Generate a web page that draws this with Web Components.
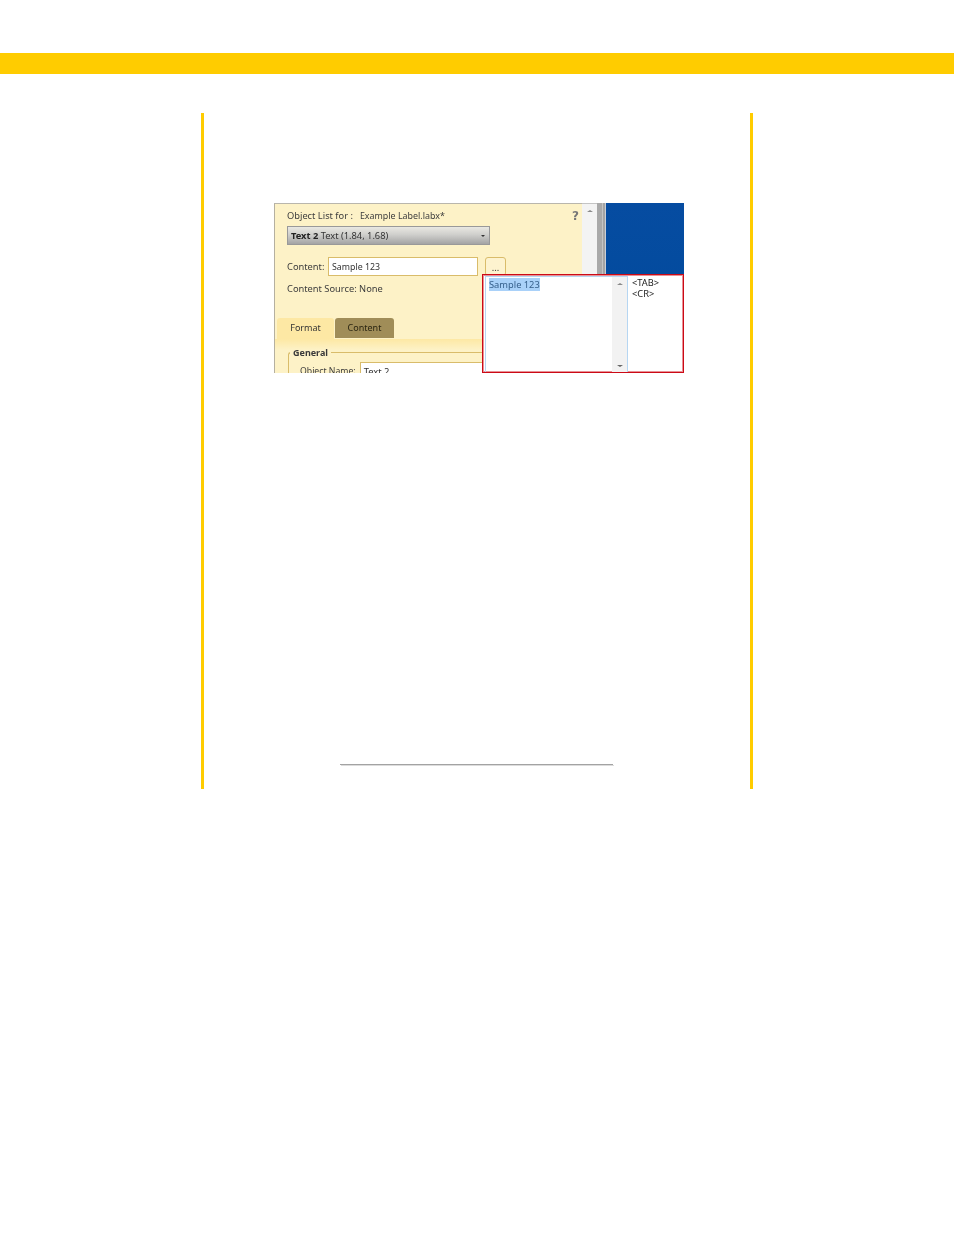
<!DOCTYPE html>
<html>
<head>
<meta charset="utf-8">
<title>Content</title>
<style>
html,body{margin:0;padding:0;background:#fff;}
</style>
</head>
<body>
<page-band></page-band>
<page-column>
  <label-shot></label-shot>
</page-column>

<script>
// yellow strip across the top of the page
class PageBand extends HTMLElement {
    constructor(){
        super();
        this.attachShadow({mode:'open'}).innerHTML = `
<style>
:host{display:block;height:21px;margin-top:53px;background:#ffcc00;}
</style>`;
    }
}

// text column with the two yellow side rules, and the footnote rule at its foot
class PageColumn extends HTMLElement {
    constructor(){
        super();
        this.attachShadow({mode:'open'}).innerHTML = `
<style>
:host{display:block;box-sizing:border-box;width:552px;height:676px;margin:39px 0 0 201px;
  border-left:3px solid #ffcc00;border-right:3px solid #ffcc00;padding:90px 0 0 70px;}
.rule{width:273px;height:1px;margin:391px 0 0 66px;background:#a3a3a3;box-shadow:1px 1px 0 #dcdcdc;}
</style>
<slot></slot>
<div class="rule"></div>`;
    }
}

class WinTab extends HTMLElement {
    constructor(){
        super();
        this.attachShadow({mode:'open'}).innerHTML = `
<style>
:host{display:block;box-sizing:border-box;height:21px;padding-top:3px;text-align:center;border-radius:3px 3px 0 0;
  font-size:9px;line-height:14px;color:#333;background:#fde8a4;}
:host([dark]){height:20px;background:#a08d58;color:#2b2612;}
</style>
<slot></slot>`;
    }
}

// the application's yellow side panel, cut off at the bottom by the screenshot
class ObjectPanel extends HTMLElement {
    constructor(){
        super();
        this.attachShadow({mode:'open'}).innerHTML = `
<style>
:host{display:block;box-sizing:border-box;width:308px;height:170px;overflow:hidden;
  border-left:1px solid #b5b0a0;border-top:1px solid #b9b6ac;background:#fdf2c7;color:#3c3c3c;font-size:9.3px;line-height:14px;}
.head{padding:5px 0 0 12px;}
.top{display:flex;padding-right:3px;}
.top b{margin-left:auto;font:bold 12px/14px "DejaVu Sans",sans-serif;color:#777;}
.top span+span{margin-left:7px;font-size:8.9px;}
.combo{box-sizing:border-box;display:flex;align-items:center;justify-content:space-between;width:203px;height:19px;margin-top:3px;padding:0 4px 0 3px;
  border:1px solid #999;background:linear-gradient(#e9e8e2,#cfcfcc 45%,#a4a4a4);color:#333;}
.combo b{color:#222;}
.combo i{width:0;height:0;border:2px solid transparent;border-top:2px solid #333;border-bottom:0;}
.row{display:flex;align-items:center;gap:4px;margin-top:12px;height:19px;}
.row>span:first-child{width:37px;}
.field{box-sizing:border-box;width:150px;height:19px;padding:2px 3px;border:1px solid #d9bc6a;background:#fff;color:#333;font-size:8.8px;}
.dots{box-sizing:border-box;width:21px;height:19px;margin-left:3px;text-align:center;border:1px solid #d9bc6a;border-radius:3px;background:#fdf3cf;color:#333;line-height:20px;}
.source{margin-top:6px;}
.tabs{display:flex;gap:1px;margin:22px 0 0 2px;}
.tabs win-tab:first-child{width:57px;}
.tabs win-tab:last-child{width:59px;}
.body{height:34px;background:linear-gradient(#fde8a4,#fdf2c7 11px);padding-top:7px;box-sizing:border-box;}
fieldset{margin:0 0 0 13px;padding:0 0 0 11px;height:60px;border:1px solid #d9bc6a;border-right:0;border-bottom:0;border-radius:3px 0 0 0;}
legend{padding:0 3px;margin-left:-10px;font-weight:bold;font-size:9px;line-height:13px;color:#3a3a3a;}
.name{display:flex;align-items:center;gap:4px;margin-top:3px;font-size:8.7px;}
.name .field{width:140px;height:18px;font-size:9.4px;}
</style>
<div class="head">
  <div class="top"><span>Object List for :</span><span>Example Label.labx*</span><b>?</b></div>
  <div class="combo"><span><b>Text 2</b> Text (1.84, 1.68)</span><i></i></div>
  <div class="row"><span>Content:</span><div class="field">Sample 123</div><div class="dots">...</div></div>
  <div class="source">Content Source: None</div>
</div>
<div class="tabs"><win-tab>Format</win-tab><win-tab dark>Content</win-tab></div>
<div class="body">
  <fieldset><legend>General</legend>
    <div class="name"><span>Object Name:</span><div class="field">Text 2</div></div>
  </fieldset>
</div>`;
    }
}

// the red-framed callout of the text box and its special characters
class ContentPopup extends HTMLElement {
    constructor(){
        super();
        this.attachShadow({mode:'open'}).innerHTML = `
<style>
:host{position:absolute;left:208px;top:71px;box-sizing:border-box;width:202px;height:99px;display:flex;
  border:1px solid #cc0a16;box-shadow:inset 0 0 0 1px rgba(204,10,22,.45);background:#fff;font-size:9.3px;line-height:11px;color:#333;}
.list{box-sizing:border-box;flex:none;width:143px;margin:1px 0 0 2px;display:flex;justify-content:space-between;
  border-left:1px solid #b6d6f2;border-right:1px solid #b6d6f2;border-top:1px solid #b6d6f2;}
.list span{align-self:flex-start;margin:1px 0 0 3px;padding:1px 0;background:#a9d1f9;color:#36608c;line-height:11px;}
.bar{width:15px;display:flex;flex-direction:column;justify-content:space-between;align-items:center;padding:6px 0 5px;background:#f2f2f2;}
.bar i{width:0;height:0;border:3px solid transparent;border-top:0;border-bottom:2px solid #888;}
.bar i+i{border-bottom:0;border-top:2px solid #666;}
.chars{flex:1;padding:2px 0 0 4px;color:#222;}
</style>
<div class="list"><span>Sample 123</span><div class="bar"><i></i><i></i></div></div>
<div class="chars">&lt;TAB&gt;<br>&lt;CR&gt;</div>`;
    }
}

// the whole screenshot figure: panel, scrollbar, splitter, blue desktop
class LabelShot extends HTMLElement {
    constructor(){
        super();
        this.attachShadow({mode:'open'}).innerHTML = `
<style>
:host{display:flex;position:relative;width:410px;height:170px;overflow:hidden;filter:blur(.3px);
  font-family:"Noto Sans",sans-serif;}
.scroll{width:15px;box-sizing:border-box;padding-top:6px;border-top:1px solid #c4c4c4;background:#f3f3f3;display:flex;justify-content:center;align-items:flex-start;}
.scroll i{width:0;height:0;border:3px solid transparent;border-top:0;border-bottom:2px solid #888;}
.split{width:9px;background:linear-gradient(90deg,#a9a9a9 0 5px,#c4c4c4 5px 6px,#a4a4a4 6px 8px,#c9ced6 8px);}
.desk{flex:1;background:linear-gradient(#064ca1,#004a9b);}
</style>
<object-panel></object-panel>
<div class="scroll"><i></i></div>
<div class="split"></div>
<div class="desk"></div>
<content-popup></content-popup>`;
    }
}

customElements.define('page-band',PageBand);
customElements.define('page-column',PageColumn);
customElements.define('win-tab',WinTab);
customElements.define('object-panel',ObjectPanel);
customElements.define('content-popup',ContentPopup);
customElements.define('label-shot',LabelShot);
</script>
</body>
</html>
